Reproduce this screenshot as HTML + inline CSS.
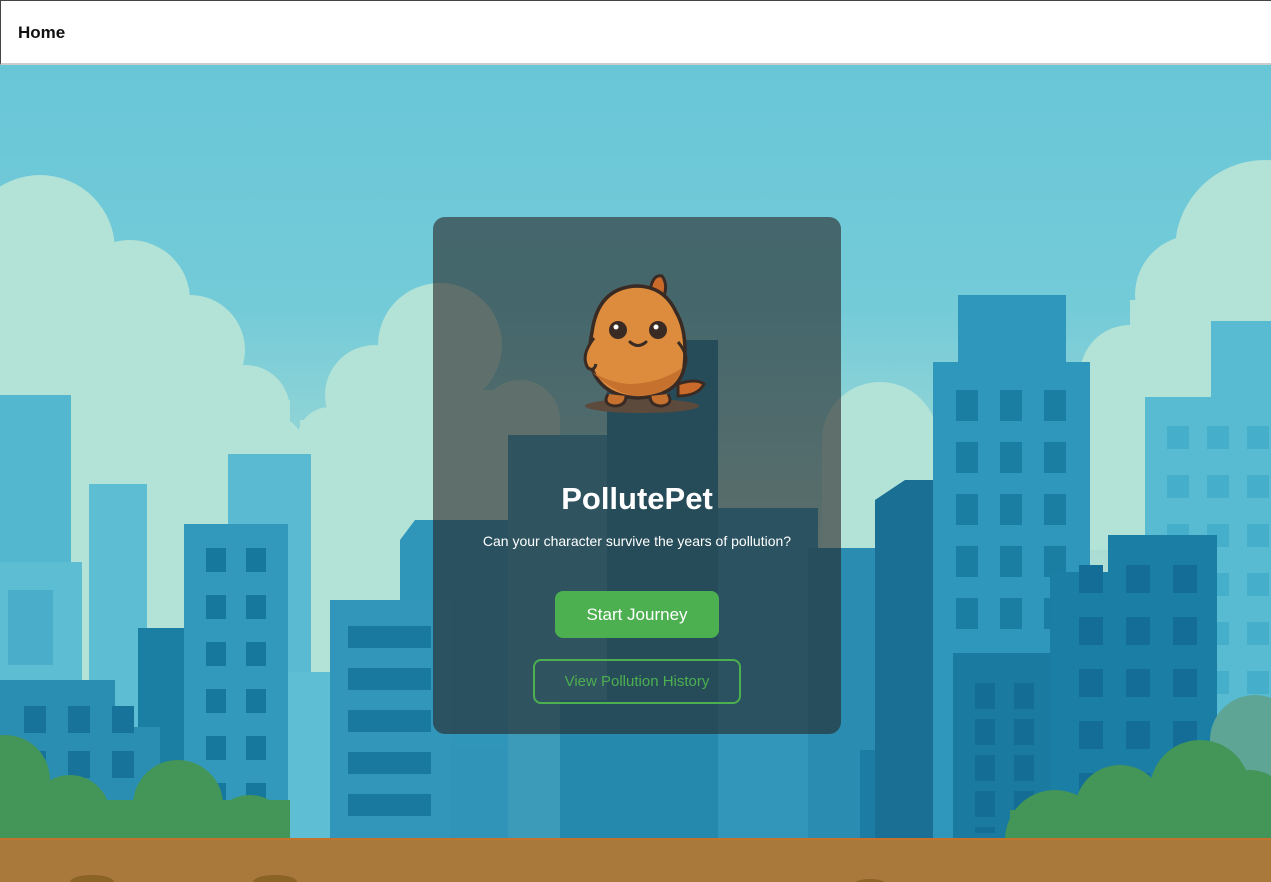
<!DOCTYPE html>
<html><head><meta charset="utf-8"><style>
*{margin:0;padding:0;box-sizing:border-box}
body{width:1271px;height:882px;overflow:hidden;position:relative;font-family:"Liberation Sans","DejaVu Sans",sans-serif;background:#6cc7d6}
#hdr{position:absolute;left:0;top:0;width:1271px;height:65px;background:#fff;border-top:1px solid #444;border-left:1px solid #444;border-bottom:2px solid #ccc}
#hdr span{position:absolute;left:17px;top:22px;font-size:17px;font-weight:bold;color:#111}
svg.bg{position:absolute;left:0;top:0}
#card{position:absolute;left:433px;top:217px;width:408px;height:517px;border-radius:12px;background:rgba(38,37,36,0.6)}
h1{position:absolute;left:0;width:408px;top:264px;text-align:center;color:#fff;font-size:31px;font-weight:bold}
p.sub{position:absolute;left:0;width:408px;top:316px;text-align:center;color:#fff;font-size:14px}
.b1{position:absolute;left:122px;top:374px;width:164px;height:47px;border-radius:8px;background:#4caf50;color:#fff;font-size:17px;text-align:center;line-height:47px}
.b2{position:absolute;left:100px;top:442px;width:208px;height:45px;border-radius:8px;border:2px solid #4caf50;color:#4caf50;font-size:15px;text-align:center;line-height:41px}
</style></head><body>
<svg class="bg" width="1271" height="882" viewBox="0 0 1271 882">
<defs>
<linearGradient id="sky" x1="0" y1="0" x2="0" y2="1"><stop offset="0" stop-color="#65c5d6"/><stop offset="0.35" stop-color="#74cbd8"/><stop offset="0.75" stop-color="#c4e4d2"/><stop offset="1" stop-color="#e2ecc4"/></linearGradient>
<pattern id="w1" x="206" y="548" width="40" height="47" patternUnits="userSpaceOnUse"><rect width="20" height="24" fill="#17789e"/></pattern>
<pattern id="w2" x="956" y="390" width="44" height="52" patternUnits="userSpaceOnUse"><rect width="22" height="31" fill="#1a7da2"/></pattern>
<pattern id="w3" x="1167" y="426" width="40" height="49" patternUnits="userSpaceOnUse"><rect width="22" height="23" fill="#45aeca"/></pattern>
<pattern id="w4" x="1079" y="565" width="47" height="52" patternUnits="userSpaceOnUse"><rect width="24" height="28" fill="#136d96"/></pattern>
<pattern id="w5" x="348" y="626" width="200" height="42" patternUnits="userSpaceOnUse"><rect width="83" height="22" fill="#19799f"/></pattern>
<pattern id="w6" x="24" y="706" width="44" height="45" patternUnits="userSpaceOnUse"><rect width="22" height="27" fill="#17739a"/></pattern>
<pattern id="w7" x="975" y="683" width="39" height="36" patternUnits="userSpaceOnUse"><rect width="20" height="26" fill="#146d95"/></pattern>
</defs>
<rect width="1271" height="882" fill="url(#sky)"/>
<g fill="#b3e2d7">
<circle cx="40" cy="250" r="75"/><circle cx="130" cy="300" r="60"/><circle cx="190" cy="350" r="55"/><circle cx="245" cy="410" r="45"/><circle cx="275" cy="445" r="28"/>
<rect x="0" y="300" width="200" height="400"/><rect x="0" y="400" width="290" height="300"/>
<circle cx="440" cy="345" r="62"/><circle cx="375" cy="395" r="50"/><circle cx="330" cy="440" r="33"/><circle cx="520" cy="420" r="40"/><rect x="300" y="420" width="260" height="260"/><rect x="360" y="390" width="150" height="60"/>
<circle cx="1265" cy="250" r="90"/><circle cx="1195" cy="295" r="60"/><circle cx="1130" cy="375" r="50"/><rect x="1130" y="300" width="141" height="250"/><rect x="1085" y="380" width="100" height="170"/>
<circle cx="880" cy="440" r="58"/><rect x="822" y="440" width="116" height="200"/>
</g>
<rect x="0" y="395" width="71" height="450" fill="#52b7cf"/>
<rect x="0" y="562" width="82" height="280" fill="#5dbdd3"/>
<rect x="8" y="590" width="45" height="75" fill="#4aaecb"/>
<rect x="89" y="484" width="58" height="360" fill="#5cbdd3"/>
<rect x="228" y="454" width="83" height="390" fill="#59bad1"/>
<rect x="138" y="628" width="50" height="215" fill="#1b7ea3"/>
<rect x="184" y="524" width="104" height="320" fill="#3299bd"/>
<rect x="206" y="548" width="62" height="280" fill="url(#w1)"/>
<rect x="0" y="680" width="115" height="165" fill="#2a8db2"/>
<rect x="115" y="727" width="45" height="118" fill="#2a8db2"/>
<rect x="24" y="706" width="120" height="80" fill="url(#w6)"/>
<rect x="288" y="672" width="42" height="170" fill="#5ebfd4"/>
<polygon points="400,540 415,520 520,520 520,840 400,840" fill="#2f95b9"/>
<rect x="330" y="600" width="120" height="245" fill="#3196ba"/>
<rect x="348" y="626" width="83" height="200" fill="url(#w5)"/>
<rect x="450" y="750" width="82" height="95" fill="#2f94b8"/>
<rect x="508" y="435" width="147" height="410" fill="#3c9bb9"/>
<rect x="607" y="340" width="111" height="505" fill="#2a88a8"/>
<rect x="560" y="700" width="200" height="145" fill="#2589ad"/>
<rect x="718" y="508" width="100" height="335" fill="#3196b9"/>
<rect x="808" y="548" width="92" height="295" fill="#2a8cb0"/>
<rect x="860" y="750" width="120" height="95" fill="#1c7ca3"/>
<polygon points="875,500 905,480 933,480 933,845 875,845" fill="#1a6f95"/>
<rect x="958" y="295" width="108" height="70" fill="#2e97bb"/>
<rect x="933" y="362" width="157" height="480" fill="#2e97bb"/>
<rect x="956" y="390" width="110" height="260" fill="url(#w2)"/>
<rect x="1145" y="397" width="126" height="445" fill="#58bbd1"/>
<rect x="1211" y="321" width="60" height="80" fill="#58bbd1"/>
<rect x="1167" y="426" width="104" height="400" fill="url(#w3)"/>
<rect x="953" y="653" width="100" height="190" fill="#1b7aa0"/>
<rect x="975" y="683" width="60" height="150" fill="url(#w7)"/>
<rect x="1050" y="572" width="60" height="270" fill="#1a7ea5"/>
<rect x="1108" y="535" width="109" height="307" fill="#1a7ea5"/>
<rect x="1079" y="565" width="130" height="270" fill="url(#w4)"/>
<circle cx="1255" cy="740" r="45" fill="#5ea596"/>
<g fill="#449558">
<circle cx="5" cy="780" r="45"/><circle cx="70" cy="815" r="40"/><circle cx="178" cy="805" r="45"/><circle cx="123" cy="830" r="25"/><circle cx="250" cy="835" r="40"/><rect x="0" y="800" width="290" height="40"/>
<circle cx="1055" cy="840" r="50"/><circle cx="1120" cy="810" r="45"/><circle cx="1200" cy="790" r="50"/><circle cx="1250" cy="810" r="40"/><rect x="1010" y="810" width="261" height="30"/>
</g>
<rect x="0" y="838" width="1271" height="44" fill="#a8793b"/>
<rect x="0" y="838" width="1271" height="2" fill="#c2732e"/>
<ellipse cx="92" cy="882" rx="22" ry="7" fill="#8a6325"/><ellipse cx="275" cy="882" rx="22" ry="7" fill="#8a6325"/><ellipse cx="870" cy="884" rx="16" ry="5" fill="#8a6325"/>
</svg>
<div id="hdr"><span>Home</span></div>
<div id="card">
<svg style="position:absolute;left:145px;top:55px" width="130" height="145" viewBox="0 0 130 145">
<ellipse cx="64" cy="134" rx="57" ry="7" fill="#5c4a3c"/>
<path d="M72,20 Q74,2 84,4 Q90,12 86,24 Z" fill="#c96a2a" stroke="#3a2a24" stroke-width="3"/>
<path d="M100,112 Q118,106 126,112 Q120,124 100,124 Z" fill="#c96a2a" stroke="#3a2a24" stroke-width="3"/>
<path d="M58,14 Q20,16 14,60 Q10,82 12,90 Q20,124 60,126 Q100,124 106,96 Q110,60 98,40 Q86,14 58,14 Z" fill="#dc8c3c" stroke="#3a2a24" stroke-width="3.5"/>
<path d="M14,100 Q40,124 60,124 Q98,122 104,96 Q80,112 50,112 Q30,110 14,100 Z" fill="#c7712f"/>
<path d="M16,66 Q2,84 10,96 Q16,100 18,92" fill="#dc8c3c" stroke="#3a2a24" stroke-width="3"/>
<path d="M100,70 Q112,84 106,96" fill="none" stroke="#3a2a24" stroke-width="3"/>
<path d="M30,122 Q24,132 36,134 Q48,134 48,124" fill="#c7712f" stroke="#3a2a24" stroke-width="3"/>
<path d="M72,124 Q72,134 84,134 Q96,132 90,122" fill="#c7712f" stroke="#3a2a24" stroke-width="3"/>
<circle cx="40" cy="58" r="9" fill="#3a2a24"/><circle cx="80" cy="58" r="9" fill="#3a2a24"/>
<circle cx="38" cy="55" r="2.5" fill="#fff"/><circle cx="78" cy="55" r="2.5" fill="#fff"/>
<path d="M52,70 Q60,77 68,70" fill="none" stroke="#3a2a24" stroke-width="3" stroke-linecap="round"/>
</svg>
<h1>PollutePet</h1>
<p class="sub">Can your character survive the years of pollution?</p>
<div class="b1">Start Journey</div>
<div class="b2">View Pollution History</div>
</div>
</body></html>
